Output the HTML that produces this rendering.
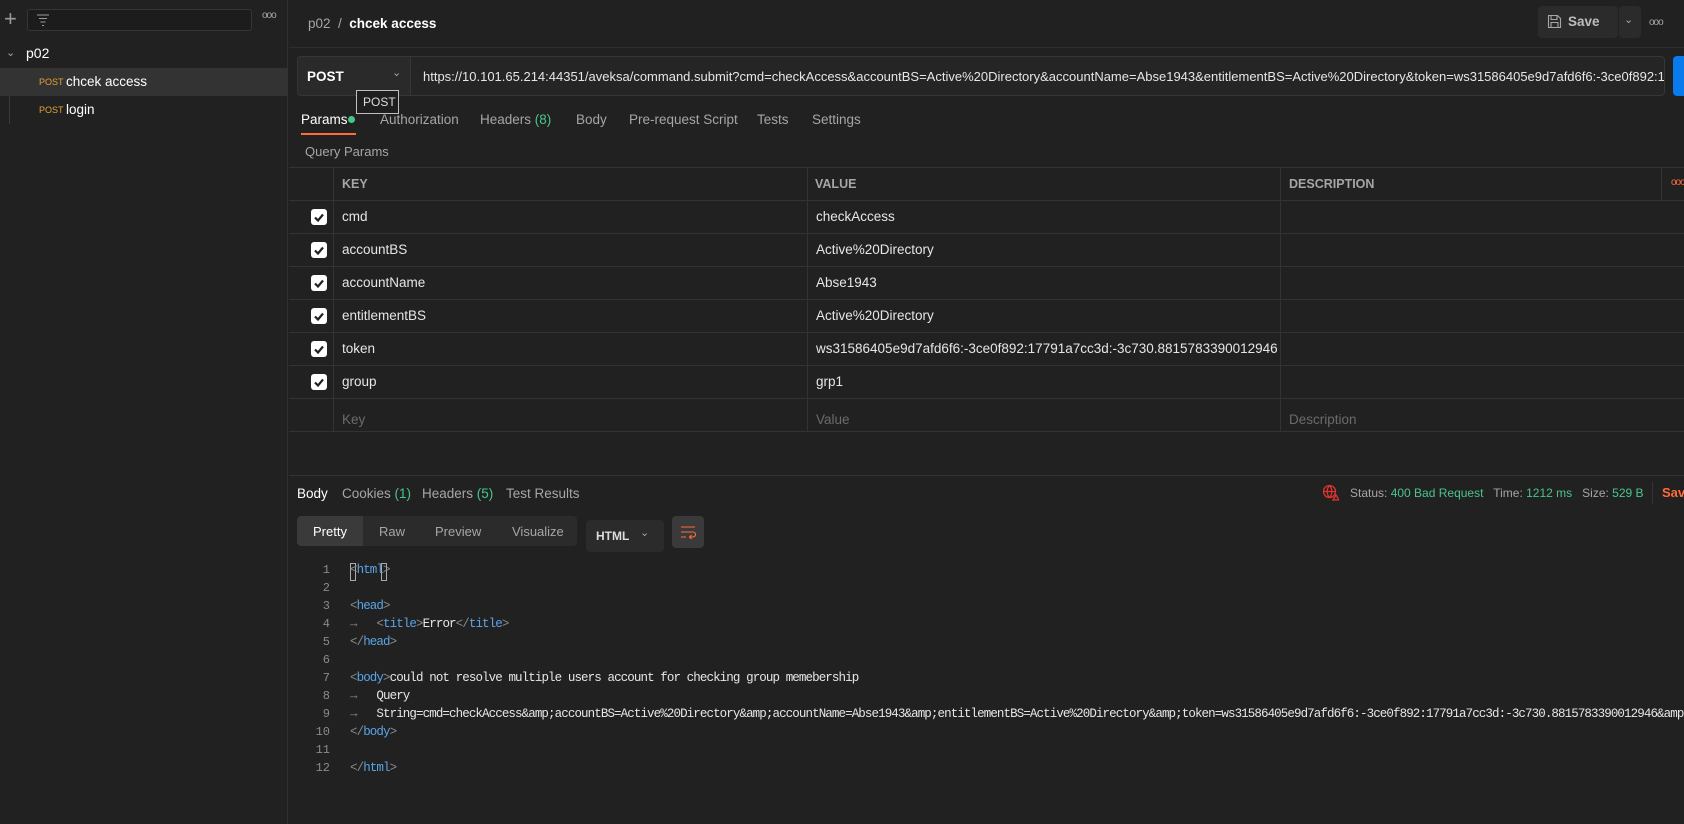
<!DOCTYPE html>
<html><head><meta charset="utf-8"><style>
*{box-sizing:border-box;margin:0;padding:0}
html,body{width:1684px;height:824px;overflow:hidden}
body{background:#212121;font-family:"Liberation Sans",sans-serif;color:#e6e6e6;font-size:13px;position:relative}
#w{position:absolute;left:0;top:0;width:1684px;height:824px;overflow:hidden}
.a{position:absolute;white-space:nowrap}
.mut{color:#a6a6a6}
.grn{color:#49c58b}
.side{left:0;top:0;width:288px;height:824px;border-right:1px solid #303030}
.code{font-family:"Liberation Mono",monospace;font-size:12.5px;letter-spacing:-0.9px;color:#e6e6e6}
.ln{font-family:"Liberation Mono",monospace;font-size:12px;color:#8a8a8a;width:40px;text-align:right}
.tag{color:#5aa4e8}
.br{color:#8a8a8a}
.cb{width:16px;height:16px;background:#fff;border-radius:3px}
.hl{position:absolute;left:289px;width:1395px;height:1px;background:#333}
.vl{position:absolute;width:1px;background:#333}
.pm{font-size:9px;color:#e7a236}
</style></head><body><div id="w">
<div class="a side"></div>
<div class="a" style="left:4px;top:6px;font-size:22px;color:#9a9a9a;font-weight:300">+</div>
<div class="a" style="left:27px;top:9px;width:225px;height:22px;border:1px solid #353535;border-radius:3px;background:#1c1c1c"></div>
<svg class="a" style="left:36px;top:13px" width="14" height="14"><g stroke="#9a9a9a" stroke-width="1"><line x1="1" y1="2" x2="13" y2="2"/><line x1="3" y1="5.5" x2="11" y2="5.5"/><line x1="4.5" y1="9" x2="9.5" y2="9"/><line x1="6" y1="12.5" x2="8" y2="12.5"/></g></svg>
<div class="a mut" style="left:262px;top:10px;font-size:10px;letter-spacing:-1px">ooo</div>
<div class="a mut" style="left:6px;top:46px;font-size:11px">⌄</div>
<div class="a" style="left:26px;top:45px;font-size:14px;color:#fff">p02</div>
<div class="a" style="left:0;top:68px;width:288px;height:28px;background:#333"></div>
<div class="a" style="left:9px;top:96px;width:1px;height:28px;background:#3a3a3a"></div>
<div class="a pm" style="left:39px;top:77px">POST</div>
<div class="a" style="left:66px;top:74px;font-size:13.5px;color:#fff">chcek access</div>
<div class="a pm" style="left:39px;top:105px">POST</div>
<div class="a" style="left:66px;top:102px;font-size:13.5px;color:#fff">login</div>
<div class="a mut" style="left:308px;top:16px;font-size:13.5px">p02 &nbsp;/&nbsp; <b style="color:#fff">chcek access</b></div>
<div class="a" style="left:289px;top:47px;width:1395px;height:1px;background:#2e2e2e"></div>
<div class="a" style="left:1538px;top:6px;width:80px;height:32px;background:#2b2b2b;border-radius:4px"></div>
<svg class="a" style="left:1547px;top:14px" width="15" height="15"><path d="M1.5 1.5h9l3 3v9h-12z M4 1.5v4h6v-4 M4 13.5v-5h7v5" fill="none" stroke="#a6a6a6" stroke-width="1.1"/></svg>
<div class="a" style="left:1568px;top:14px;font-size:13.5px;color:#bdbdbd;font-weight:bold">Save</div>
<div class="a" style="left:1619px;top:6px;width:22px;height:32px;background:#2b2b2b;border-radius:4px"></div>
<div class="a mut" style="left:1624px;top:13px;font-size:11px">⌄</div>
<div class="a mut" style="left:1649px;top:17px;font-size:10px;letter-spacing:-1px">ooo</div>
<div class="a" style="left:297px;top:56px;width:114px;height:40px;background:#2a2a2a;border:1px solid #363636;border-radius:4px 0 0 4px"></div>
<div class="a" style="left:307px;top:69px;font-size:13.5px;font-weight:bold;color:#fff">POST</div>
<div class="a mut" style="left:392px;top:66px;font-size:11px">⌄</div>
<div class="a" style="left:411px;top:56px;width:1254px;height:40px;background:#252525;border:1px solid #363636;border-left:none;border-radius:0 4px 4px 0;overflow:hidden">
<div style="position:absolute;left:12px;top:12px;font-size:13px;color:#e6e6e6;white-space:nowrap">https://10.101.65.214:44351/aveksa/command.submit?cmd=checkAccess&amp;accountBS=Active%20Directory&amp;accountName=Abse1943&amp;entitlementBS=Active%20Directory&amp;token=ws31586405e9d7afd6f6:-3ce0f892:177</div></div>
<div class="a" style="left:1673px;top:56px;width:11px;height:40px;background:#097bed;border-radius:4px 0 0 4px"></div>
<div class="a" style="left:356px;top:90px;width:43px;height:24px;background:#1e1e1e;border:1px solid #bfbfbf;font-size:12px;color:#ddd;padding:4px 0 0 6px">POST</div>
<div class="a" style="left:301px;top:112px;font-size:13.5px;color:#fff">Params</div>
<div class="a" style="left:348px;top:116px;width:7px;height:7px;border-radius:50%;background:#49c58b"></div>
<div class="a" style="left:301px;top:133px;width:55px;height:2px;background:#ff6c37"></div>
<div class="a mut" style="left:380px;top:112px;font-size:13.5px">Authorization</div>
<div class="a mut" style="left:480px;top:112px;font-size:13.5px">Headers <span class="grn">(8)</span></div>
<div class="a mut" style="left:576px;top:112px;font-size:13.5px">Body</div>
<div class="a mut" style="left:629px;top:112px;font-size:13.5px">Pre-request Script</div>
<div class="a mut" style="left:757px;top:112px;font-size:13.5px">Tests</div>
<div class="a mut" style="left:812px;top:112px;font-size:13.5px">Settings</div>
<div class="a mut" style="left:305px;top:144px;font-size:13px">Query Params</div>
<div class="hl" style="top:167px"></div><div class="hl" style="top:200px"></div><div class="hl" style="top:233px"></div><div class="hl" style="top:266px"></div><div class="hl" style="top:299px"></div><div class="hl" style="top:332px"></div><div class="hl" style="top:365px"></div><div class="hl" style="top:398px"></div><div class="hl" style="top:431px"></div>
<div class="vl" style="left:333px;top:167px;height:264px"></div>
<div class="vl" style="left:807px;top:167px;height:264px"></div>
<div class="vl" style="left:1280px;top:167px;height:264px"></div>
<div class="vl" style="left:1661px;top:167px;height:33px"></div>
<div class="a mut" style="left:342px;top:177px;font-size:12.5px;font-weight:bold">KEY</div>
<div class="a mut" style="left:815px;top:177px;font-size:12.5px;font-weight:bold">VALUE</div>
<div class="a mut" style="left:1289px;top:177px;font-size:12.5px;font-weight:bold">DESCRIPTION</div>
<div class="a" style="left:1671px;top:177px;font-size:10px;color:#ff6c37;letter-spacing:-1px">ooo</div>
<div class="a" style="left:311px;top:209px"><div class="cb"></div></div>
<div class="a" style="left:311px;top:242px"><div class="cb"></div></div>
<div class="a" style="left:311px;top:275px"><div class="cb"></div></div>
<div class="a" style="left:311px;top:308px"><div class="cb"></div></div>
<div class="a" style="left:311px;top:341px"><div class="cb"></div></div>
<div class="a" style="left:311px;top:374px"><div class="cb"></div></div>
<svg class="a" style="left:311px;top:209px" width="16" height="180"><g fill="none" stroke="#212121" stroke-width="2.2"><path d="M4 8.5l3 3 5-6"/><path d="M4 41.5l3 3 5-6"/><path d="M4 74.5l3 3 5-6"/><path d="M4 107.5l3 3 5-6"/><path d="M4 140.5l3 3 5-6"/><path d="M4 173.5l3 3 5-6"/></g></svg>
<div class="a" style="left:342px;top:209px;font-size:13.5px">cmd</div>
<div class="a" style="left:342px;top:242px;font-size:13.5px">accountBS</div>
<div class="a" style="left:342px;top:275px;font-size:13.5px">accountName</div>
<div class="a" style="left:342px;top:308px;font-size:13.5px">entitlementBS</div>
<div class="a" style="left:342px;top:341px;font-size:13.5px">token</div>
<div class="a" style="left:342px;top:374px;font-size:13.5px">group</div>
<div class="a" style="left:342px;top:412px;font-size:13.5px;color:#6b6b6b">Key</div>
<div class="a" style="left:816px;top:209px;font-size:13.5px">checkAccess</div>
<div class="a" style="left:816px;top:242px;font-size:13.5px">Active%20Directory</div>
<div class="a" style="left:816px;top:275px;font-size:13.5px">Abse1943</div>
<div class="a" style="left:816px;top:308px;font-size:13.5px">Active%20Directory</div>
<div class="a" style="left:816px;top:341px;font-size:13.5px">ws31586405e9d7afd6f6:-3ce0f892:17791a7cc3d:-3c730.8815783390012946</div>
<div class="a" style="left:816px;top:374px;font-size:13.5px">grp1</div>
<div class="a" style="left:816px;top:412px;font-size:13.5px;color:#6b6b6b">Value</div>
<div class="a" style="left:1289px;top:412px;font-size:13.5px;color:#6b6b6b">Description</div>
<div class="a" style="left:289px;top:475px;width:1395px;height:1px;background:#333"></div>
<div class="a" style="left:297px;top:486px;font-size:13.5px;color:#fff">Body</div>
<div class="a mut" style="left:342px;top:486px;font-size:13.5px">Cookies <span class="grn">(1)</span></div>
<div class="a mut" style="left:422px;top:486px;font-size:13.5px">Headers <span class="grn">(5)</span></div>
<div class="a mut" style="left:506px;top:486px;font-size:13.5px">Test Results</div>
<svg class="a" style="left:1322px;top:484px" width="17" height="17"><g fill="none" stroke="#e0332e" stroke-width="1.3"><circle cx="7.5" cy="7.5" r="6"/><path d="M1.5 7.5h12M7.5 1.5c-3 3-3 9 0 12M7.5 1.5c3 3 3 9 0 12"/><path d="M11 16l3-5 3 5z" fill="#212121"/></g></svg>
<div class="a mut" style="left:1350px;top:486px;font-size:12px">Status: <span class="grn">400 Bad Request</span> &nbsp; Time: <span class="grn">1212 ms</span> &nbsp; Size: <span class="grn">529 B</span></div>
<div class="a" style="left:1652px;top:482px;width:1px;height:22px;background:#333"></div>
<div class="a" style="left:1662px;top:485px;font-size:13px;font-weight:bold;color:#ff6c37">Sav</div>
<div class="a" style="left:297px;top:516px;width:280px;height:30px;background:#2b2b2b;border-radius:4px"></div>
<div class="a" style="left:297px;top:516px;width:66px;height:30px;background:#3a3a3a;border-radius:4px 0 0 4px"></div>
<div class="a" style="left:313px;top:524px;font-size:13px;color:#fff">Pretty</div>
<div class="a mut" style="left:379px;top:524px;font-size:13px">Raw</div>
<div class="a mut" style="left:435px;top:524px;font-size:13px">Preview</div>
<div class="a mut" style="left:512px;top:524px;font-size:13px">Visualize</div>
<div class="a" style="left:586px;top:520px;width:78px;height:32px;background:#2b2b2b;border-radius:4px"></div>
<div class="a" style="left:596px;top:529px;font-size:12px;font-weight:bold;color:#ddd">HTML</div>
<div class="a mut" style="left:640px;top:526px;font-size:11px">⌄</div>
<div class="a" style="left:672px;top:516px;width:32px;height:32px;background:#3a3a3a;border-radius:4px"></div>
<svg class="a" style="left:680px;top:524px" width="16" height="16"><g fill="none" stroke="#ff6c37" stroke-width="1.1"><path d="M1 3h14M1 8h12a2.5 2.5 0 010 5h-3M1 13h5M11.5 11l-2 2 2 2"/></g></svg>
<div class="a ln" style="left:290px;top:563px">1</div>
<div class="a ln" style="left:290px;top:581px">2</div>
<div class="a ln" style="left:290px;top:599px">3</div>
<div class="a ln" style="left:290px;top:617px">4</div>
<div class="a ln" style="left:290px;top:635px">5</div>
<div class="a ln" style="left:290px;top:653px">6</div>
<div class="a ln" style="left:290px;top:671px">7</div>
<div class="a ln" style="left:290px;top:689px">8</div>
<div class="a ln" style="left:290px;top:707px">9</div>
<div class="a ln" style="left:290px;top:725px">10</div>
<div class="a ln" style="left:290px;top:743px">11</div>
<div class="a ln" style="left:290px;top:761px">12</div>
<div class="a" style="left:350px;top:563px;width:6px;height:18px;border:1px solid #aaa"></div>
<div class="a" style="left:381px;top:563px;width:6px;height:18px;border:1px solid #aaa"></div>
<div class="a code" style="left:350px;top:563px"><span class="br">&lt;</span><span class="tag">html</span><span class="br">&gt;</span></div>
<div class="a code" style="left:350px;top:599px"><span class="br">&lt;</span><span class="tag">head</span><span class="br">&gt;</span></div>
<div class="a code" style="left:350px;top:617px"><span class="br">→&nbsp;&nbsp;&nbsp;</span><span class="br">&lt;</span><span class="tag">title</span><span class="br">&gt;</span>Error<span class="br">&lt;/</span><span class="tag">title</span><span class="br">&gt;</span></div>
<div class="a code" style="left:350px;top:635px"><span class="br">&lt;/</span><span class="tag">head</span><span class="br">&gt;</span></div>
<div class="a code" style="left:350px;top:671px"><span class="br">&lt;</span><span class="tag">body</span><span class="br">&gt;</span>could not resolve multiple users account for checking group memebership</div>
<div class="a code" style="left:350px;top:689px"><span class="br">→&nbsp;&nbsp;&nbsp;</span>Query</div>
<div class="a code" style="left:350px;top:707px"><span class="br">→&nbsp;&nbsp;&nbsp;</span>String=cmd=checkAccess&amp;amp;accountBS=Active%20Directory&amp;amp;accountName=Abse1943&amp;amp;entitlementBS=Active%20Directory&amp;amp;token=ws31586405e9d7afd6f6:-3ce0f892:17791a7cc3d:-3c730.8815783390012946&amp;amp</div>
<div class="a code" style="left:350px;top:725px"><span class="br">&lt;/</span><span class="tag">body</span><span class="br">&gt;</span></div>
<div class="a code" style="left:350px;top:761px"><span class="br">&lt;/</span><span class="tag">html</span><span class="br">&gt;</span></div>
</div></body></html>
